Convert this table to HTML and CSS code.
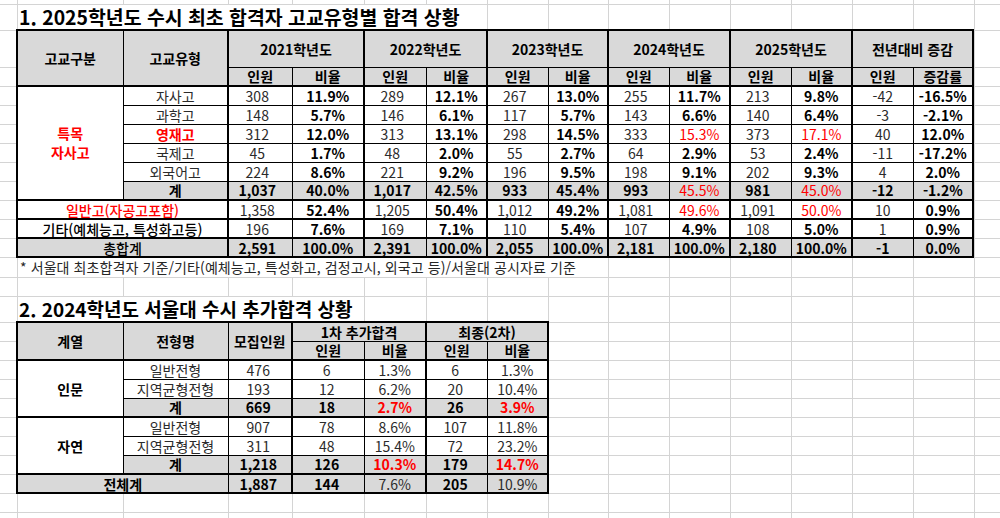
FILE: index.html
```html
<!DOCTYPE html>
<html lang="ko">
<head>
<meta charset="utf-8">
<title>서울대 수시 합격 상황</title>
<link rel="stylesheet" href="styles.css">
</head>
<body>
<div class="sheet">
  <h1 class="title title-1">1. 2025학년도 수시 최초 합격자 고교유형별 합격 상황</h1>
  <table class="tbl tbl-1">
    <colgroup>
      <col class="w106"><col class="w105">
      <col class="w64 thick"><col class="w72">
      <col class="w62 thick"><col class="w61">
      <col class="w61 thick"><col class="w60">
      <col class="w61 thick"><col class="w61">
      <col class="w61 thick"><col class="w61">
      <col class="w61 thick"><col class="w60">
    </colgroup>
    <thead>
      <tr class="h37">
        <th rowspan="2">고교구분</th>
        <th rowspan="2">고교유형</th>
        <th colspan="2">2021학년도</th>
        <th colspan="2">2022학년도</th>
        <th colspan="2">2023학년도</th>
        <th colspan="2">2024학년도</th>
        <th colspan="2">2025학년도</th>
        <th colspan="2">전년대비 증감</th>
      </tr>
      <tr class="h19">
        <th>인원</th><th>비율</th><th>인원</th><th>비율</th><th>인원</th><th>비율</th>
        <th>인원</th><th>비율</th><th>인원</th><th>비율</th><th>인원</th><th>증감률</th>
      </tr>
    </thead>
    <tbody>
      <tr class="h19 tt">
        <td rowspan="6" class="red b group">특목<br>자사고</td>
        <td>자사고</td>
        <td class="n">308</td><td class="b">11.9%</td>
        <td class="n">289</td><td class="b">12.1%</td>
        <td class="n">267</td><td class="b">13.0%</td>
        <td class="n">255</td><td class="b">11.7%</td>
        <td class="n">213</td><td class="b">9.8%</td>
        <td>-42</td><td class="b">-16.5%</td>
      </tr>
      <tr class="h19">
        <td>과학고</td>
        <td class="n">148</td><td class="b">5.7%</td>
        <td class="n">146</td><td class="b">6.1%</td>
        <td class="n">117</td><td class="b">5.7%</td>
        <td class="n">143</td><td class="b">6.6%</td>
        <td class="n">140</td><td class="b">6.4%</td>
        <td>-3</td><td class="b">-2.1%</td>
      </tr>
      <tr class="h19">
        <td class="red b">영재고</td>
        <td class="n">312</td><td class="b">12.0%</td>
        <td class="n">313</td><td class="b">13.1%</td>
        <td class="n">298</td><td class="b">14.5%</td>
        <td class="n">333</td><td class="red">15.3%</td>
        <td class="n">373</td><td class="red">17.1%</td>
        <td>40</td><td class="b">12.0%</td>
      </tr>
      <tr class="h19">
        <td>국제고</td>
        <td class="n">45</td><td class="b">1.7%</td>
        <td class="n">48</td><td class="b">2.0%</td>
        <td class="n">55</td><td class="b">2.7%</td>
        <td class="n">64</td><td class="b">2.9%</td>
        <td class="n">53</td><td class="b">2.4%</td>
        <td>-11</td><td class="b">-17.2%</td>
      </tr>
      <tr class="h19">
        <td>외국어고</td>
        <td class="n">224</td><td class="b">8.6%</td>
        <td class="n">221</td><td class="b">9.2%</td>
        <td class="n">196</td><td class="b">9.5%</td>
        <td class="n">198</td><td class="b">9.1%</td>
        <td class="n">202</td><td class="b">9.3%</td>
        <td>4</td><td class="b">2.0%</td>
      </tr>
      <tr class="h19 sum">
        <td class="b">계</td>
        <td class="n b">1,037</td><td class="b">40.0%</td>
        <td class="n b">1,017</td><td class="b">42.5%</td>
        <td class="n b">933</td><td class="b">45.4%</td>
        <td class="n b">993</td><td class="red">45.5%</td>
        <td class="n b">981</td><td class="red">45.0%</td>
        <td class="b">-12</td><td class="b">-1.2%</td>
      </tr>
      <tr class="h19 tt">
        <td colspan="2" class="red md">일반고(자공고포함)</td>
        <td class="n">1,358</td><td class="b">52.4%</td>
        <td class="n">1,205</td><td class="b">50.4%</td>
        <td class="n">1,012</td><td class="b">49.2%</td>
        <td class="n">1,081</td><td class="red">49.6%</td>
        <td class="n">1,091</td><td class="red">50.0%</td>
        <td>10</td><td class="b">0.9%</td>
      </tr>
      <tr class="h19 tt">
        <td colspan="2" class="md">기타(예체능고, 특성화고등)</td>
        <td class="n">196</td><td class="b">7.6%</td>
        <td class="n">169</td><td class="b">7.1%</td>
        <td class="n">110</td><td class="b">5.4%</td>
        <td class="n">107</td><td class="b">4.9%</td>
        <td class="n">108</td><td class="b">5.0%</td>
        <td>1</td><td class="b">0.9%</td>
      </tr>
      <tr class="h19 tt sum">
        <td colspan="2" class="md">총합계</td>
        <td class="n b">2,591</td><td class="b">100.0%</td>
        <td class="n b">2,391</td><td class="b">100.0%</td>
        <td class="n b">2,055</td><td class="b">100.0%</td>
        <td class="n b">2,181</td><td class="b">100.0%</td>
        <td class="n b">2,180</td><td class="b">100.0%</td>
        <td class="b">-1</td><td class="b">0.0%</td>
      </tr>
    </tbody>
  </table>
  <p class="note">* 서울대 최초합격자 기준/기타(예체능고, 특성화고, 검정고시, 외국고 등)/서울대 공시자료 기준</p>
  <h1 class="title title-2">2. 2024학년도 서울대 수시 추가합격 상황</h1>
  <table class="tbl tbl-2">
    <colgroup>
      <col class="w106"><col class="w105"><col class="w64">
      <col class="w72 thick"><col class="w62">
      <col class="w61 thick"><col class="w61">
    </colgroup>
    <thead>
      <tr class="h19">
        <th rowspan="2">계열</th>
        <th rowspan="2">전형명</th>
        <th rowspan="2">모집인원</th>
        <th colspan="2">1차 추가합격</th>
        <th colspan="2">최종(2차)</th>
      </tr>
      <tr class="h19">
        <th>인원</th><th>비율</th><th>인원</th><th>비율</th>
      </tr>
    </thead>
    <tbody>
      <tr class="h19 tt">
        <td rowspan="3" class="b">인문</td>
        <td>일반전형</td>
        <td class="m">476</td><td class="m">6</td><td>1.3%</td><td class="m">6</td><td>1.3%</td>
      </tr>
      <tr class="h19">
        <td>지역균형전형</td>
        <td class="m">193</td><td class="m">12</td><td>6.2%</td><td class="m">20</td><td>10.4%</td>
      </tr>
      <tr class="h19 sum">
        <td class="b">계</td>
        <td class="m b">669</td><td class="m b">18</td><td class="red b">2.7%</td><td class="m b">26</td><td class="red b">3.9%</td>
      </tr>
      <tr class="h19 tt">
        <td rowspan="3" class="b">자연</td>
        <td>일반전형</td>
        <td class="m">907</td><td class="m">78</td><td>8.6%</td><td class="m">107</td><td>11.8%</td>
      </tr>
      <tr class="h19">
        <td>지역균형전형</td>
        <td class="m">311</td><td class="m">48</td><td>15.4%</td><td class="m">72</td><td>23.2%</td>
      </tr>
      <tr class="h19 sum">
        <td class="b">계</td>
        <td class="m b">1,218</td><td class="m b">126</td><td class="red b">10.3%</td><td class="m b">179</td><td class="red b">14.7%</td>
      </tr>
      <tr class="h19 tt sum">
        <td colspan="2" class="b">전체계</td>
        <td class="m b">1,887</td><td class="m b">144</td><td>7.6%</td><td class="m b">205</td><td>10.9%</td>
      </tr>
    </tbody>
  </table>
</div>
</body>
</html>
```

FILE: styles.css
```css
html {
  height: 100%;
  background-color: #fff;
  --g: #d4d4d4;
  background-image:
    linear-gradient(var(--g), var(--g)),
    linear-gradient(var(--g), var(--g)),
    linear-gradient(var(--g), var(--g)),
    linear-gradient(var(--g), var(--g)),
    linear-gradient(var(--g), var(--g)),
    linear-gradient(var(--g), var(--g)),
    linear-gradient(var(--g), var(--g)),
    linear-gradient(var(--g), var(--g)),
    linear-gradient(var(--g), var(--g)),
    linear-gradient(var(--g), var(--g)),
    linear-gradient(var(--g), var(--g)),
    linear-gradient(var(--g), var(--g)),
    linear-gradient(var(--g), var(--g)),
    linear-gradient(var(--g), var(--g)),
    linear-gradient(var(--g), var(--g)),
    linear-gradient(var(--g), var(--g)),
    linear-gradient(var(--g), var(--g)),
    linear-gradient(var(--g), var(--g)),
    linear-gradient(var(--g), var(--g)),
    linear-gradient(var(--g), var(--g)),
    repeating-linear-gradient(to bottom, transparent 0 18px, var(--g) 18px 19px),
    repeating-linear-gradient(to bottom, transparent 0 18px, var(--g) 18px 19px);
  background-size:
    1px 100%, 1px 100%, 1px 100%, 1px 100%, 1px 100%,
    1px 100%, 1px 100%, 1px 100%, 1px 100%, 1px 100%,
    1px 100%, 1px 100%, 1px 100%, 1px 100%, 1px 100%,
    100% 1px, 100% 1px, 100% 1px, 100% 1px, 100% 1px,
    100% 190px, 100% 214px;
  background-position:
    17px 0, 123px 0, 228px 0, 292px 0, 364px 0,
    426px 0, 487px 0, 548px 0, 608px 0, 669px 0,
    730px 0, 791px 0, 852px 0, 913px 0, 974px 0,
    0 4px, 0 30px, 0 67px, 0 277px, 0 296px,
    0 68px, 0 304px;
  background-repeat: no-repeat;
}

body {
  margin: 0;
  font-family: "Noto Sans CJK KR", "Noto Sans", sans-serif;
  font-size: 14px;
  color: #000;
}

.sheet {
  display: flex;
  flex-direction: column;
  align-items: flex-start;
}

.title {
  margin: 5px 0 0 18px;
  height: 24px;
  padding-left: 1px;
  box-sizing: border-box;
  background: #fff;
  font-size: 19.4px;
  font-weight: 700;
  line-height: 24px;
  white-space: nowrap;
}

.title-1 { width: 469px; }
.title-2 { width: 346px; margin-top: 20px; font-size: 19px; }

.note {
  margin: 0 0 0 18px;
  height: 19px;
  width: 590px;
  padding-left: 2px;
  box-sizing: border-box;
  background: #fff;
  font-size: 14px;
  letter-spacing: 0.1px;
  line-height: 19px;
  color: #262626;
  white-space: nowrap;
}

.tbl {
  margin-left: 16px;
  border-collapse: collapse;
  table-layout: fixed;
  border: 2px solid #000;
  background: #fff;
}

.tbl-1 { width: 958px; }
.tbl-2 { width: 533px; }

.w106 { width: 106px; }
.w105 { width: 105px; }
.w72 { width: 72px; }
.w64 { width: 64px; }
.w62 { width: 62px; }
.w61 { width: 61px; }
.w60 { width: 60px; }

col.thick { border-left: 2px solid #000; }

.tbl th,
.tbl td {
  border: 1px solid #000;
  padding: 0;
  text-align: center;
  vertical-align: middle;
  line-height: 16px;
  white-space: nowrap;
  overflow: hidden;
}

.tbl th {
  background: #d9d9d9;
  font-weight: 700;
}

.tbl td { color: #2b2b2b; font-weight: 400; }

.tbl thead tr:last-child th,
.tbl thead th[rowspan] { border-bottom: 2px solid #000; }

.tbl tr.tt td { border-top: 2px solid #000; }

.h37 { height: 37px; }
.h19 { height: 19px; }

.tbl tr.sum td { background: #d9d9d9; }

.tbl td.b { font-weight: 700; color: #000; }
.tbl td.md { font-weight: 500; color: #000; }
.tbl td.red { color: #f00; }
.tbl td.group { line-height: 19px; }
.tbl td.n { padding-right: 6px; }
.tbl td.m { padding-right: 3px; }
```
